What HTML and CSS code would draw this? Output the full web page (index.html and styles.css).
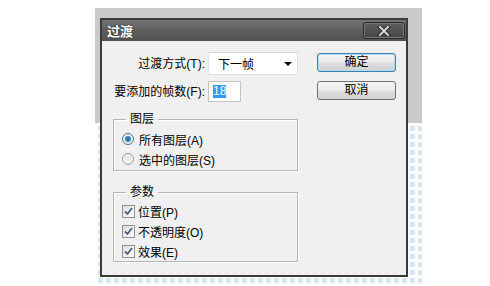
FILE: index.html
```html
<!DOCTYPE html>
<html>
<head lang="zh">
    <meta charset="UTF-8">
    <title>过渡</title>
    <link rel="stylesheet" href="styles.css">
</head>
<body>

<div class="stage">
    <div class="dialog">
        <div class="dialog-title">
            <span class="title-text">过渡</span>
            <a class="close-btn" href="javascript:void(0);">
                <svg width="14" height="10" viewBox="0 0 14 10">
                    <path d="M3 1 L11 9 M11 1 L3 9" stroke="#2a2a2a" stroke-width="4" stroke-linecap="square"/>
                    <path d="M3 1 L11 9 M11 1 L3 9" stroke="#d6d6d6" stroke-width="2" stroke-linecap="square"/>
                </svg>
            </a>
        </div>

        <div class="dialog-body">
            <div class="form-col">
                <div class="form-grid">
                    <label class="form-label">过渡方式(T):</label>
                    <div class="select-box">
                        <span>下一帧</span>
                        <i class="select-arrow"></i>
                    </div>
                    <label class="form-label">要添加的帧数(F):</label>
                    <div class="num-input"><span class="sel-text">18</span></div>
                </div>

                <!--图层-->
                <fieldset class="group group-layers">
                    <legend>图层</legend>
                    <div class="opt-row"><span class="radio radio-on"></span>所有图层(A)</div>
                    <div class="opt-row"><span class="radio"></span>选中的图层(S)</div>
                </fieldset>

                <!--参数-->
                <fieldset class="group group-params">
                    <legend>参数</legend>
                    <div class="opt-row"><span class="check"><svg width="9" height="9" viewBox="0 0 9 9"><path d="M1 4.5 L3.5 7 L8 1" fill="none" stroke="#4a5d86" stroke-width="1.8"/></svg></span>位置(P)</div>
                    <div class="opt-row"><span class="check"><svg width="9" height="9" viewBox="0 0 9 9"><path d="M1 4.5 L3.5 7 L8 1" fill="none" stroke="#4a5d86" stroke-width="1.8"/></svg></span>不透明度(O)</div>
                    <div class="opt-row"><span class="check"><svg width="9" height="9" viewBox="0 0 9 9"><path d="M1 4.5 L3.5 7 L8 1" fill="none" stroke="#4a5d86" stroke-width="1.8"/></svg></span>效果(E)</div>
                </fieldset>
            </div>

            <div class="btn-col">
                <a class="btn btn-default" href="javascript:void(0);">确定</a>
                <a class="btn" href="javascript:void(0);">取消</a>
            </div>
        </div>
    </div>
</div>

</body>
</html>
```

FILE: styles.css
```css
* {
    padding: 0px;
    margin: 0px;
    box-sizing: border-box;
}

body {
    background: #ffffff;
    font-family: "Liberation Sans", "Noto Sans CJK SC", sans-serif;
    font-size: 12px;
    color: #000000;
}

a {
    text-decoration: none;
    color: #000000;
}

/* 灰色画布 + 透明格子 */
.stage {
    margin: 8px 0px 0px 95px;
    width: 327px;
    height: 278px;
    padding: 10px 0px 0px 5px;
    background:
        linear-gradient(#cacaca, #cacaca) top left / 100% 115px no-repeat,
        linear-gradient(90deg, #ffffff 3px, transparent 3px) 0px 3px / 8px 8px,
        linear-gradient(#ffffff 3px, transparent 3px) 0px 3px / 8px 8px,
        #d9e5f3;
}

.dialog {
    width: 308px;
    height: 259px;
    border: 2px solid #3b3b3b;
    background: #f0f0f0;
    display: flex;
    flex-direction: column;
}

.dialog-title {
    height: 21px;
    background: linear-gradient(#747474, #606060 45%, #525252);
    display: flex;
    align-items: center;
    justify-content: space-between;
    padding: 0px 1px 0px 5px;
}

.title-text {
    color: #ffffff;
    font-weight: bold;
    font-size: 13px;
    text-shadow: 0px 0px 2px #222222;
}

.close-btn {
    width: 42px;
    height: 17px;
    border: 1px solid #2c2c2c;
    border-radius: 3px;
    background: linear-gradient(#5f5f5f, #454545);
    box-shadow: inset 0px 0px 0px 1px #777777;
    display: flex;
    align-items: center;
    justify-content: center;
}

.dialog-body {
    flex: 1;
    display: flex;
    padding: 11px 10px 0px 10px;
}

.form-col {
    width: 186px;
}

.form-grid {
    display: grid;
    grid-template-columns: 93px 90px;
    grid-template-rows: 23px 21px;
    column-gap: 3px;
    row-gap: 6px;
    align-items: center;
}

.form-label {
    text-align: right;
    white-space: nowrap;
    line-height: 16px;
}

.select-box {
    height: 23px;
    background: #ffffff;
    border: 1px solid #e2e2e2;
    border-top-color: #d4d4d4;
    display: flex;
    align-items: center;
    justify-content: space-between;
    padding: 0px 5px 0px 9px;
}

.select-arrow {
    width: 0px;
    height: 0px;
    border-left: 4px solid transparent;
    border-right: 4px solid transparent;
    border-top: 4px solid #000000;
}

.num-input {
    width: 33px;
    height: 21px;
    background: #ffffff;
    border: 1px solid #c4c4c4;
    display: flex;
    align-items: center;
    padding-left: 4px;
}

.sel-text {
    background: #3399ff;
    color: #ffffff;
    line-height: 13px;
}

.group {
    width: 185px;
    margin-left: 1px;
    border: 1px solid #b5b5b5;
    box-shadow: 1px 1px 0px #ffffff, inset 1px 1px 0px #ffffff;
    padding: 2px 0px 1px 8px;
}

.group legend {
    margin-left: 4px;
    padding: 0px 4px;
    line-height: 16px;
}

.group-layers {
    margin-top: 9px;
}

.group-params {
    margin-top: 13px;
    padding-top: 1px;
    padding-bottom: 0px;
}

.opt-row {
    height: 20px;
    display: flex;
    align-items: center;
    white-space: nowrap;
}

.radio {
    width: 12px;
    height: 12px;
    border-radius: 50%;
    border: 1px solid #9a9a9a;
    background: radial-gradient(#e4e4e4, #fbfbfb);
    margin-right: 5px;
}

.radio-on {
    border-color: #4f6f8c;
    background: radial-gradient(circle, #2b6aa3 0px, #3f86c4 2.5px, #d8e6f1 3.5px, #f4f7fa 5px);
}

.check {
    width: 13px;
    height: 13px;
    border: 1px solid #8f8f8f;
    background: linear-gradient(135deg, #dcdcdc, #ffffff);
    display: flex;
    align-items: center;
    justify-content: center;
    margin-right: 3px;
}

.btn-col {
    margin-left: auto;
    display: flex;
    flex-direction: column;
    padding-top: 1px;
    gap: 9px;
}

.btn {
    display: block;
    width: 79px;
    height: 19px;
    line-height: 17px;
    text-align: center;
    border: 1px solid #707070;
    border-radius: 3px;
    background: linear-gradient(#f4f4f4, #ececec 48%, #dedede 52%, #d2d2d2);
}

.btn-default {
    border-color: #3c7fb1;
    box-shadow: inset 0px 0px 0px 1px #a9dcf5;
}
```
